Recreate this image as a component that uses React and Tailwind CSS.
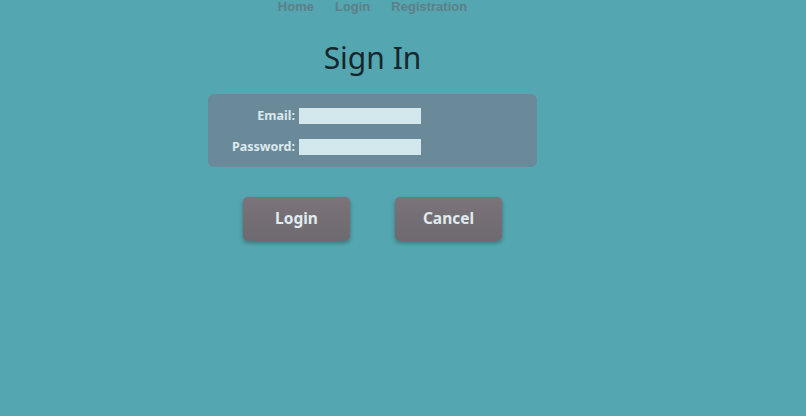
import React from 'react';

const NavBar = () => (
    <nav className="flex justify-center gap-[21px] h-[15px] leading-[14px] text-[13px] font-bold text-[#5e7f88]" style={{ fontFamily: '"Liberation Sans", Arial, sans-serif' }}>
        <a href="#">Home</a>
        <a href="#">Login</a>
        <a href="#">Registration</a>
    </nav>
);

const Field = ({ label, type }) => (
    <div className="flex items-center h-[16px]">
        <label className="w-[91px] pr-[4px] text-right text-[12.5px] font-bold text-[#dce9ee]">{label}</label>
        <input type={type} className="w-[122px] h-[16px] bg-[#d2e8ec] outline-none" />
    </div>
);

const App = () => (
    <div className="w-full h-[416px] bg-[#54a6b0] overflow-hidden" style={{ fontFamily: '"Noto Sans", "Open Sans", sans-serif' }}>
        <div className="w-[745px] flex flex-col items-center">
            <NavBar />
            <h1 className="mt-[23px] text-[30px] leading-[40px] text-[#17262c]">Sign In</h1>
            <div className="mt-[16px] w-[329px] h-[73px] rounded-[6px] bg-[#6a8a99] pt-[14px] flex flex-col gap-[15px]">
                <Field label="Email:" type="text" />
                <Field label="Password:" type="password" />
            </div>
            <div className="mt-[30px] flex gap-[45px]">
                {['Login', 'Cancel'].map(label => (
                    <button
                        key={label}
                        className="w-[107px] h-[44px] rounded-[5px] bg-gradient-to-b from-[#7b7379] to-[#6d6a70] shadow-[0_2px_4px_rgba(0,0,0,0.3)] text-[15.5px] font-bold text-[#e0ebef]"
                    >
                        {label}
                    </button>
                ))}
            </div>
        </div>
    </div>
);

export default App;
